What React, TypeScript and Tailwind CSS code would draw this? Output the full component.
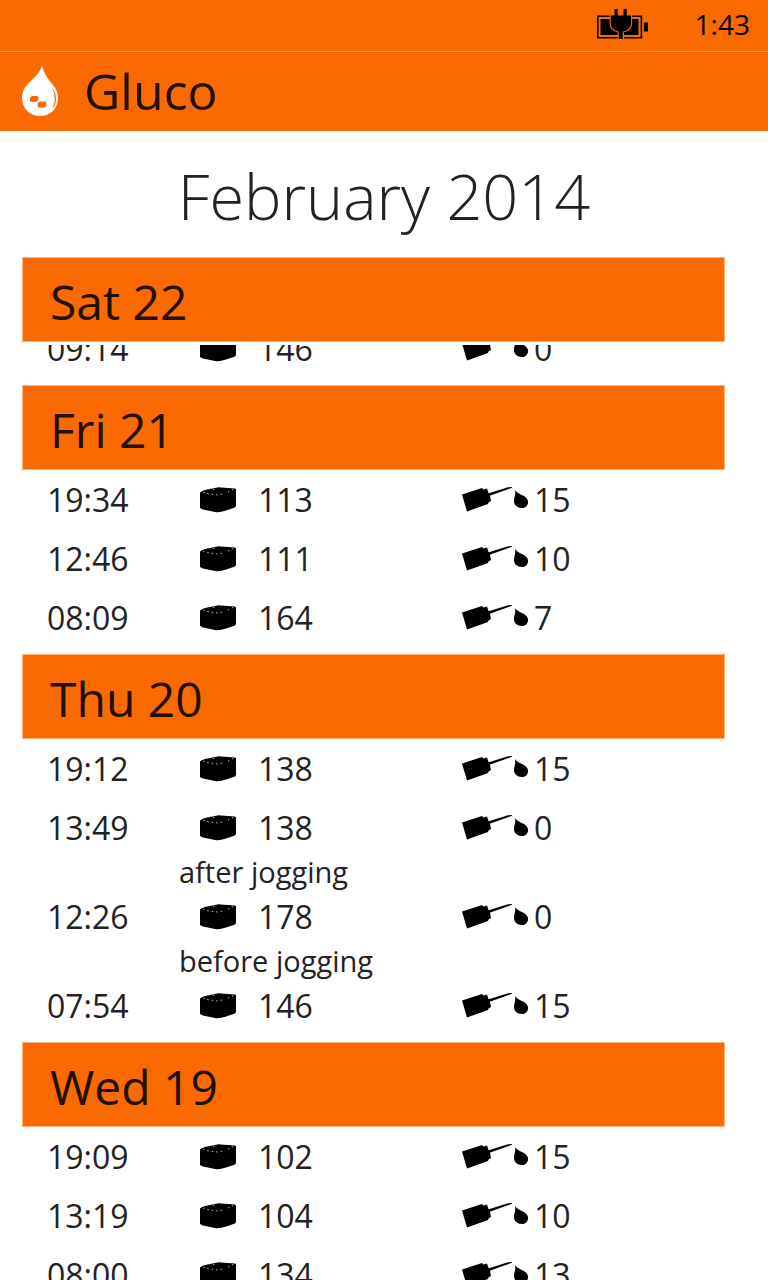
import React from "react";

type Entry = { time: string; glucose: number; insulin: number; note?: string };
type Day = { label: string; entries: Entry[]; scrolled?: boolean };

const days: Day[] = [
  {
    label: "Sat 22",
    scrolled: true,
    entries: [{ time: "09:14", glucose: 146, insulin: 0 }],
  },
  {
    label: "Fri 21",
    entries: [
      { time: "19:34", glucose: 113, insulin: 15 },
      { time: "12:46", glucose: 111, insulin: 10 },
      { time: "08:09", glucose: 164, insulin: 7 },
    ],
  },
  {
    label: "Thu 20",
    entries: [
      { time: "19:12", glucose: 138, insulin: 15 },
      { time: "13:49", glucose: 138, insulin: 0, note: "after jogging" },
      { time: "12:26", glucose: 178, insulin: 0, note: "before jogging" },
      { time: "07:54", glucose: 146, insulin: 15 },
    ],
  },
  {
    label: "Wed 19",
    entries: [
      { time: "19:09", glucose: 102, insulin: 15 },
      { time: "13:19", glucose: 104, insulin: 10 },
      { time: "08:00", glucose: 134, insulin: 13 },
    ],
  },
];

function BatteryIcon() {
  return (
    <svg width="52" height="30" viewBox="0 0 52 30" aria-hidden="true">
      <path d="M.8 7.2h43.6v21.6H.8z" fill="none" stroke="#000" strokeWidth="1.6" />
      <path d="M3.5 10h38v16h-38z" fill="#000" />
      <path d="M47 13.5h4v9h-4z" fill="#000" />
      <path
        d="M17.5 0h3.2v6.5h5.8V0h3.2v6.5H34v7.5c0 4.5-3 7.5-8.2 8.5V30h-4v-7.5c-5.2-1-8-4-8-8.5V6.5h3.7z"
        fill="#000"
        stroke="#fb6a00"
        strokeWidth="2.4"
        paintOrder="stroke"
      />
    </svg>
  );
}

function DropLogo() {
  return (
    <svg width="38" height="52" viewBox="0 0 38 52" aria-hidden="true">
      <path
        d="M20 0c1.500 8 6 14 11 20 3.500 4 5 8 5 13 0 11-8 18-18 18S0 44 0 32c0-5 2-9 5-12C11 13 18 9 20 0z"
        fill="#fff"
      />
      <path
        d="M28.500 20c4 6 6 10 5.500 15-.3 4-1.500 7-4 9 2-4 3-7 2.700-11-.2-5-1.700-9-4.200-13z"
        fill="#fb6a00"
      />
      <path d="M8 33l2-2h5l1.500 1-.5 4-3 1-5-.5z" fill="#fb6a00" />
      <path d="M15.500 38.500l2-2h6l.8 1-.3 4-2 1.300-6-.3z" fill="#fb6a00" />
    </svg>
  );
}

function SugarIcon() {
  return (
    <svg width="38" height="26" viewBox="0 0 38 26" className="shrink-0" aria-hidden="true">
      <path
        d="M1 5.500Q2 4 6 3L17 .7Q19 0 22 .5L36 1.500Q37.500 2 37 4v15l-1 1.500-9 3Q20 26 16 25L4 22.500 1 21z"
        fill="#000"
      />
      <path
        d="M4 5l4 1.500 10 1.500 8-1.500M29 5l7-3.500M14 2.500l4-1"
        fill="none"
        stroke="#bbb"
        strokeWidth="1"
        strokeDasharray="1.500 3"
      />
    </svg>
  );
}

function SyringeIcon() {
  return (
    <svg width="68" height="26" viewBox="0 0 68 26" className="shrink-0" aria-hidden="true">
      <path d="M0 7.500L20 1l1.500 1.500L25 1.500 26.500 6l1 .5L29 14l-2.500 1.500L26 17 5 24.500z" fill="#000" />
      <path d="M26 6.500L46 .3l4-.3v.8L27 9z" fill="#000" />
      <path
        d="M53 3c2 3 5 4 8 5.500 4 2 5.500 5 5 7.500-.5 3-3 5-6 5-5 0-8-3-8-7 0-4 2-6 1-11z"
        fill="#000"
      />
    </svg>
  );
}

function EntryTable({ day }: { day: Day }) {
  return (
    <table className="w-full table-fixed border-collapse text-left" aria-label={day.label}>
      <colgroup>
        <col className="w-[177px]" />
        <col className="w-[263px]" />
        <col />
      </colgroup>
      <tbody>
        {day.entries.map((entry) => (
          <React.Fragment key={entry.time}>
            <tr className="h-[59px] text-[32px] leading-10">
              <td className="p-0 pl-[25px]">{entry.time}</td>
              <td className="p-0">
                <div className="flex items-center">
                  <SugarIcon />
                  <span className="pl-[21px]">{entry.glucose}</span>
                </div>
              </td>
              <td className="p-0">
                <div className="flex items-center">
                  <SyringeIcon />
                  <span className="pl-1">{entry.insulin}</span>
                </div>
              </td>
            </tr>
            {entry.note && (
              <tr className="h-[30px] text-[29px] leading-[30px]">
                <td colSpan={3} className="p-0 pl-[157px]">
                  {entry.note}
                </td>
              </tr>
            )}
          </React.Fragment>
        ))}
      </tbody>
    </table>
  );
}

export default function App() {
  return (
    <div className="flex h-screen flex-col overflow-hidden bg-white font-['Open_Sans','Noto_Sans',sans-serif] text-[#222]">
      <div className="flex h-[52px] shrink-0 items-center justify-end gap-[46px] border-b border-[#fd9248] bg-[#fb6a00] pr-[18px] pb-1 text-black">
        <BatteryIcon />
        <span className="text-[28px] leading-10">1:43</span>
      </div>
      <header className="flex h-[79px] shrink-0 items-center gap-6 bg-[#fb6a00] pb-[2px] pl-[22px] text-[#221000]">
        <DropLogo />
        <h1 className="text-[50px] leading-[68px]">Gluco</h1>
      </header>
      <main className="min-h-0 flex-1 overflow-hidden">
        <h2 className="pt-5 text-center text-[63px] leading-[90px] font-light">February 2014</h2>
        <div className="mt-4 mr-[43px] ml-[22px]">
          {days.map((day) => (
            <section key={day.label}>
              <h3 className="flex h-[85px] items-center border border-[#fdb580] bg-[#fb6a00] pt-1 pl-[27px] text-[48px] leading-[68px] text-[#221000]">
                {day.label}
              </h3>
              <div
                className={
                  day.scrolled
                    ? "mt-[3px] flex h-[40px] flex-col justify-end overflow-hidden pb-[7px]"
                    : "pb-[7px]"
                }
              >
                <EntryTable day={day} />
              </div>
            </section>
          ))}
        </div>
      </main>
    </div>
  );
}
